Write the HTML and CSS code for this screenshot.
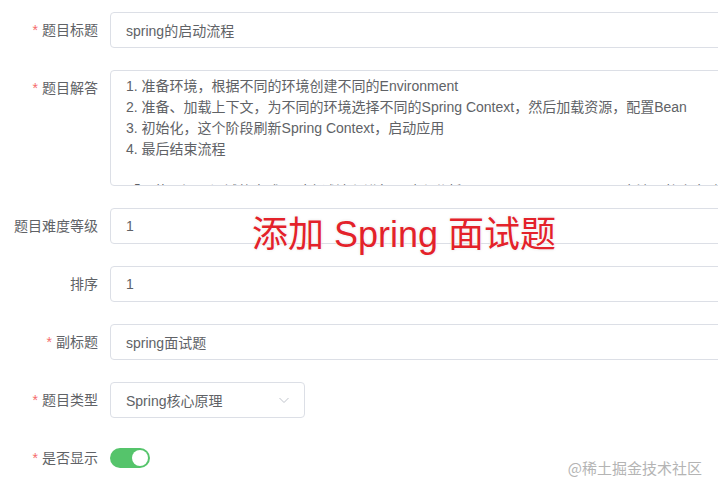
FILE: index.html
```html
<!DOCTYPE html>
<html lang="zh-CN">
<head>
  <meta charset="UTF-8">
  <meta name="viewport" content="width=device-width, initial-scale=1.0">
  <title>添加 Spring 面试题</title>
  <link rel="stylesheet" href="styles.css">
</head>
<body>

  <form class="question-form">
    <div class="form-item">
      <label class="form-label is-required">题目标题</label>
      <div class="form-content">
        <input class="text-input" type="text" value="spring的启动流程">
      </div>
    </div>

    <div class="form-item">
      <label class="form-label is-required">题目解答</label>
      <div class="form-content">
        <textarea class="text-area" rows="5">1. 准备环境，根据不同的环境创建不同的Environment
2. 准备、加载上下文，为不同的环境选择不同的Spring Context，然后加载资源，配置Bean
3. 初始化，这个阶段刷新Spring Context，启动应用
4. 最后结束流程

「可使用源码调试的方式，对上述流程进行跟踪和分析，SpringApplication.run() 方法是整个启动过程的入口」</textarea>
      </div>
    </div>

    <div class="form-item">
      <label class="form-label">题目难度等级</label>
      <div class="form-content">
        <input class="text-input" type="text" value="1">
      </div>
    </div>

    <div class="form-item">
      <label class="form-label">排序</label>
      <div class="form-content">
        <input class="text-input" type="text" value="1">
      </div>
    </div>

    <div class="form-item">
      <label class="form-label is-required">副标题</label>
      <div class="form-content">
        <input class="text-input" type="text" value="spring面试题">
      </div>
    </div>

    <div class="form-item">
      <label class="form-label is-required">题目类型</label>
      <div class="form-content">
        <div class="select-box">
          <span class="select-value">Spring核心原理</span>
          <svg class="select-arrow" width="12" height="12" viewBox="0 0 12 12">
            <path d="M1.5 4 L6 8.5 L10.5 4" fill="none" stroke="#c0c4cc" stroke-width="1"/>
          </svg>
        </div>
      </div>
    </div>

    <div class="form-item">
      <label class="form-label is-required">是否显示</label>
      <div class="form-content">
        <span class="switch is-on"><span class="switch-knob"></span></span>
      </div>
    </div>
  </form>

  <!-- overlays on top of the screenshot -->
  <div class="banner-title">添加 Spring 面试题</div>
  <div class="watermark">@稀土掘金技术社区</div>

</body>
</html>
```

FILE: styles.css
```css
/* Page */
body {
  margin: 0;
  background: #fff;
  font-family: "Liberation Sans", "Noto Sans CJK SC", sans-serif;
  font-size: 14px;
  color: #606266;
  overflow: hidden;
  position: relative;
  height: 493px;
}

/* Form layout - the inputs run past the right edge, clipped */
.question-form {
  padding-top: 12px;
  overflow: hidden;
}

.form-item {
  display: flex;
  align-items: flex-start;
  margin-bottom: 22px;
  margin-right: -40px;
}

.form-label {
  width: 110px;
  flex-shrink: 0;
  box-sizing: border-box;
  padding-right: 12px;
  text-align: right;
  line-height: 36px;
  color: #606266;
}

.form-label.is-required::before {
  content: "*";
  color: #f56c6c;
  margin-right: 4px;
}

.form-content {
  flex: 1;
  min-height: 36px;
  display: flex;
  align-items: center;
}

/* Inputs */
.text-input,
.text-area,
.select-box {
  box-sizing: border-box;
  border: 1px solid #dcdfe6;
  border-radius: 4px;
  background: #fff;
  color: #606266;
  font-family: inherit;
  font-size: 14px;
  outline: none;
}

.text-input {
  width: 100%;
  height: 36px;
  padding: 0 15px;
}

.text-area {
  display: block;
  width: 100%;
  height: 116px;
  padding: 5px 15px;
  line-height: 21px;
  resize: vertical;
  overflow: hidden;
  white-space: pre-wrap;
}

/* Select */
.select-box {
  width: 195px;
  height: 36px;
  padding: 0 14px 0 15px;
  display: flex;
  align-items: center;
  justify-content: space-between;
}

.select-arrow {
  display: block;
}

/* Switch */
.switch {
  position: relative;
  display: inline-block;
  width: 40px;
  height: 20px;
  border-radius: 10px;
  background: #dcdfe6;
}

.switch.is-on {
  background: #55c46b;
}

.switch-knob {
  position: absolute;
  top: 2px;
  left: 2px;
  width: 16px;
  height: 16px;
  border-radius: 50%;
  background: #fff;
}

.switch.is-on .switch-knob {
  left: 22px;
}

/* Overlays */
.banner-title {
  position: absolute;
  left: 252px;
  top: 213px;
  font-family: "Liberation Sans", "Noto Sans CJK SC", sans-serif;
  font-size: 36px;
  line-height: 44px;
  color: #e3222a;
  text-shadow: 0 0 2px #fff, 0 0 2px #fff, 0 0 3px rgba(0, 0, 0, 0.15);
  white-space: nowrap;
}

.watermark {
  position: absolute;
  right: 16px;
  top: 458px;
  font-family: "Noto Sans CJK SC", sans-serif;
  font-size: 15px;
  line-height: 20px;
  color: #b4b4b4;
  white-space: nowrap;
}
```
